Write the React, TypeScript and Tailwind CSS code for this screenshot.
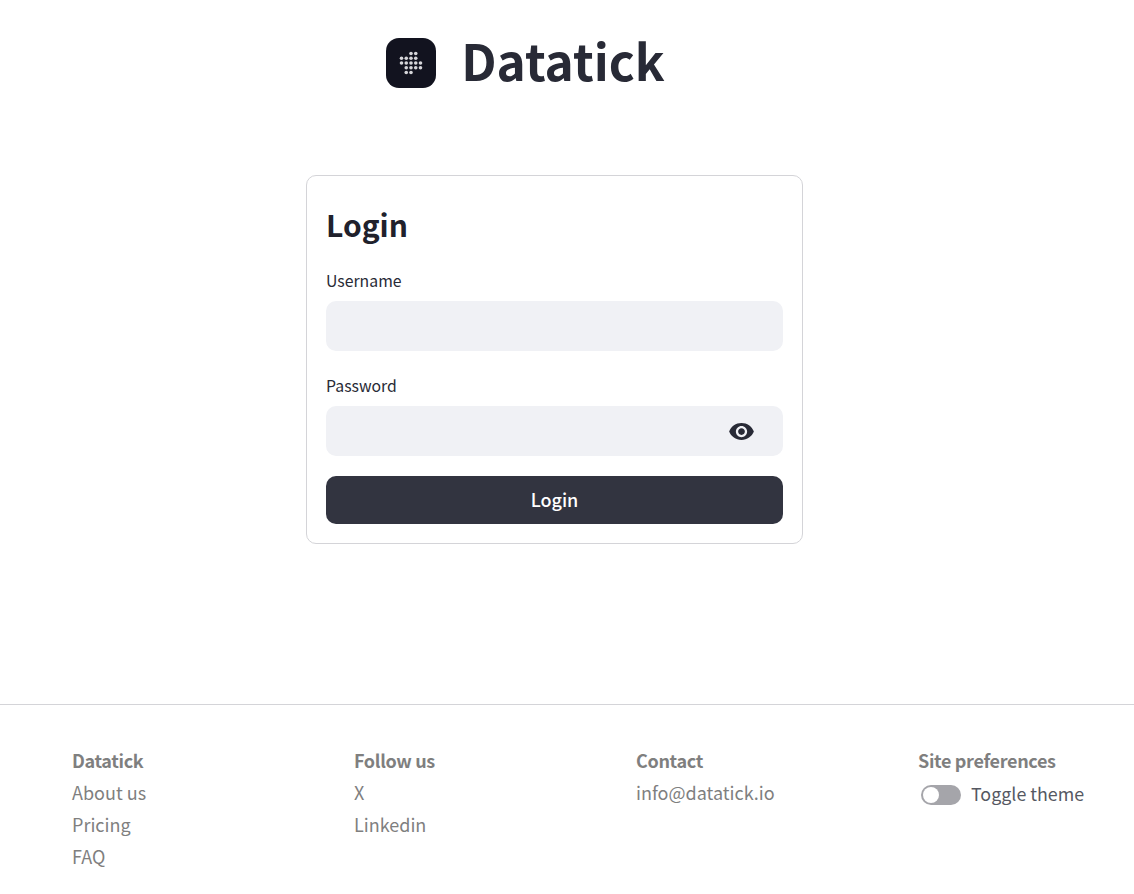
import React from 'react';
import { MdVisibility } from 'react-icons/md';

const FONT = "font-['Noto_Sans_CJK_SC','Noto_Sans',sans-serif]";

const COLUMNS = [
  { title: "Datatick", links: ["About us", "Pricing", "FAQ"] },
  { title: "Follow us", links: ["X", "Linkedin"] },
  { title: "Contact", links: ["info@datatick.io"] },
];

// rows of the logo dot grid: [first column, dot count]
const DOTS: [number, number][] = [[2, 2], [0, 4], [0, 5], [1, 4], [1, 2]];

function Logo() {
  return (
    <div className="w-[50px] h-[50px] rounded-[13px] bg-[#12131f] flex items-center justify-center">
      <svg width="30" height="30" viewBox="0 0 30 30" fill="#d6d6da">
        {DOTS.map(([start, count], row) =>
          Array.from({ length: count }).map((_, i) => (
            <circle key={`${row}-${i}`} cx={5.5 + (start + i) * 4.75} cy={5.5 + row * 4.75} r="1.8" />
          ))
        )}
      </svg>
    </div>
  );
}

function Field({ label, children }: { label: string; children?: React.ReactNode }) {
  return (
    <div className="flex flex-col">
      <label className="text-[15.8px] leading-[24px] text-[#282a36] pt-[1px] mb-[8px]">{label}</label>
      <div className="h-[50px] rounded-[10px] bg-[#f0f1f5] flex items-center justify-end pr-[28px]">
        {children}
      </div>
    </div>
  );
}

export default function App() {
  return (
    <div className={`${FONT} bg-white min-h-[894px] flex flex-col overflow-hidden`}>
      <header className="h-[125px] flex items-start justify-center pr-[83px]">
        <div className="flex items-center gap-[25px] mt-[38px] h-[50px]">
          <Logo />
          <span className="text-[49.5px] leading-[50px] font-bold text-[#282a36] -translate-y-[3px]">Datatick</span>
        </div>
      </header>

      <main className="h-[579px] pt-[50px] pr-[25px] flex justify-center items-start">
        <div className="w-[497px] h-[369px] border border-[#d4d4d8] rounded-[10px] px-[19px] pt-[28px]">
          <h1 className="text-[30px] leading-[40px] font-semibold text-[#20212c] mb-[24px]">Login</h1>
          <div className="flex flex-col gap-[22px]">
            <Field label="Username" />
            <Field label="Password">
              <MdVisibility size={27} className="text-[#282a36]" />
            </Field>
          </div>
          <button className="mt-5 w-full h-[48px] pb-[2px] rounded-[10px] bg-[#323440] text-white text-[18px] font-medium">
            Login
          </button>
        </div>
      </main>

      <footer className="border-t border-[#d4d4d8] pl-[72px] pt-[39px] grid grid-cols-[282px_282px_282px_1fr]">
        {COLUMNS.map(col => (
          <div key={col.title} className="flex flex-col text-[18px] leading-[32px] text-[#7f7f7f]">
            <span className="font-semibold tracking-[-0.33px]">{col.title}</span>
            {col.links.map(link => (
              <a key={link}>{link}</a>
            ))}
          </div>
        ))}
        <div className="flex flex-col text-[18px] leading-[32px]">
          <span className="font-semibold text-[#7f7f7f] tracking-[-0.33px]">Site preferences</span>
          <div className="flex items-center gap-[10px] pl-[3px] whitespace-nowrap mt-[1px]">
            <div className="w-10 h-5 rounded-full bg-[#a5a5aa] p-[2px] mt-[4px]">
              <div className="w-4 h-4 rounded-full bg-white" />
            </div>
            <span className="text-[#555862] text-[17.85px]">Toggle theme</span>
          </div>
        </div>
      </footer>
    </div>
  );
}
